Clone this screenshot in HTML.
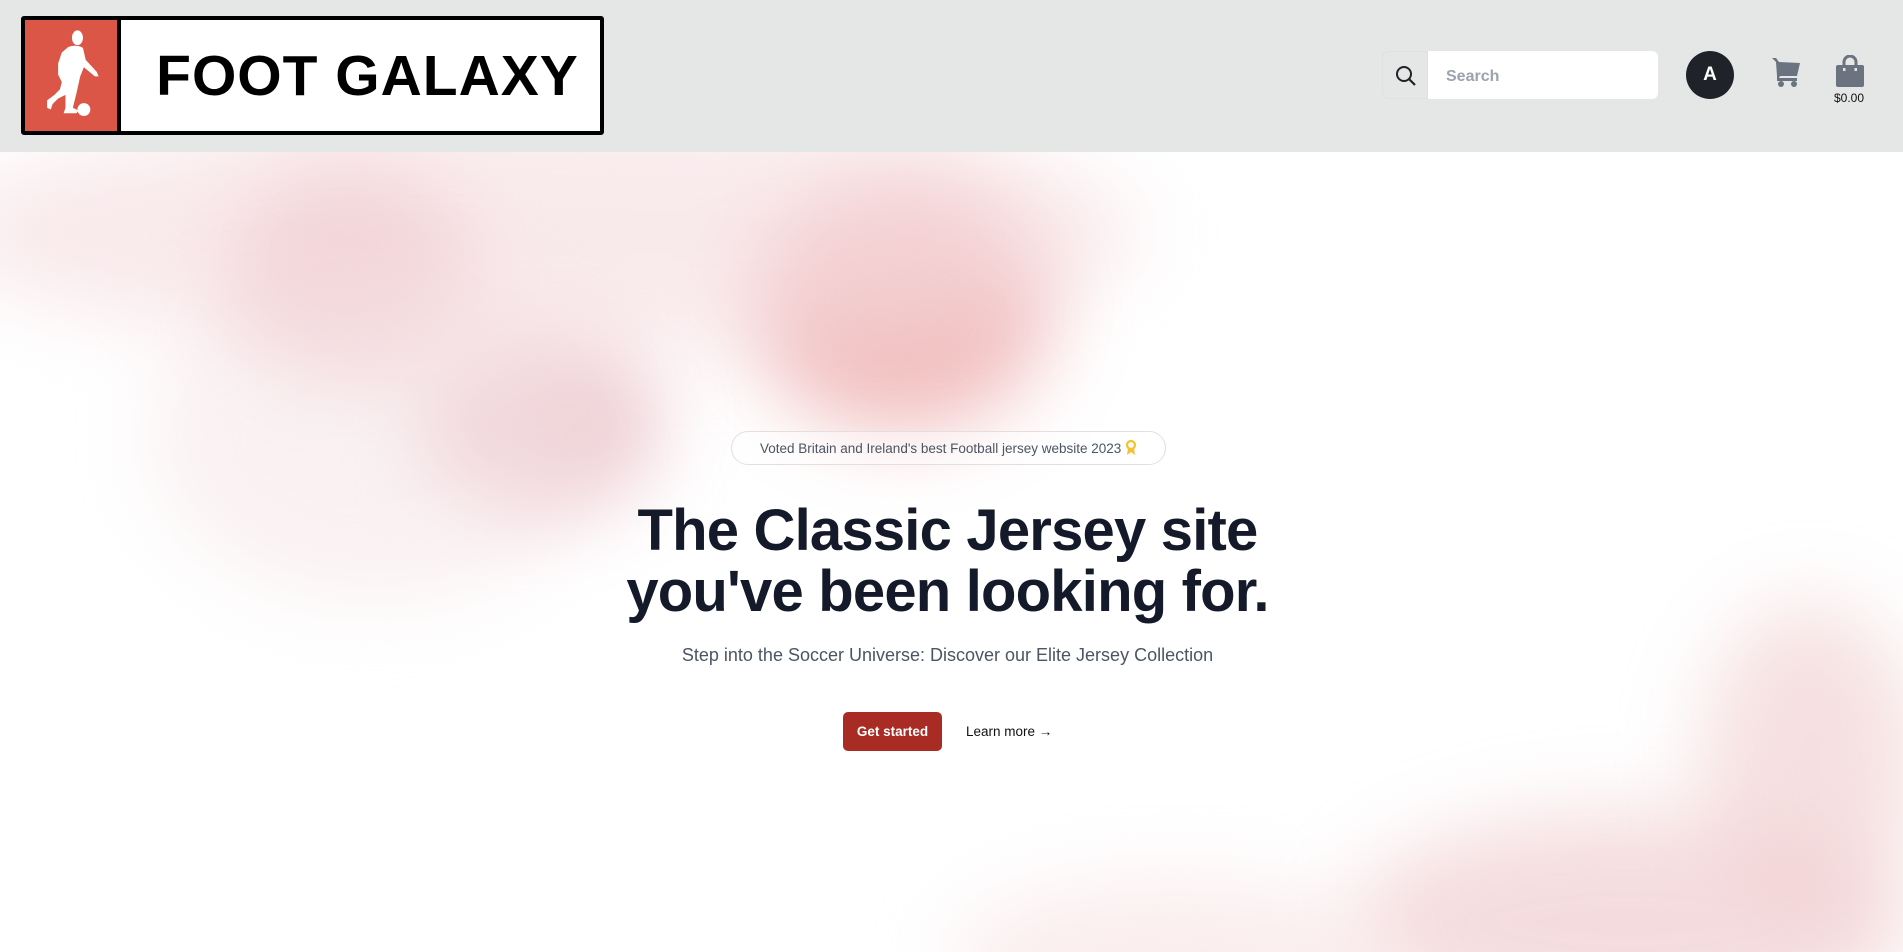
<!DOCTYPE html>
<html><head><meta charset="utf-8"><style>
*{margin:0;padding:0;box-sizing:border-box}
html,body{width:1903px;height:952px;overflow:hidden}
body{font-family:"Liberation Sans",sans-serif;background:#fff;position:relative}
header{position:absolute;left:0;top:0;width:1903px;height:152px;background:#e5e7e6}
.logo{position:absolute;left:21px;top:16px;width:583px;height:119px;border:4px solid #000;border-radius:3px;background:#fff;display:flex}
.logo .red{width:96px;height:100%;background:#dc5647;border-right:4px solid #000;position:relative}
.logo .txt{flex:1;display:flex;align-items:center;justify-content:center;font-weight:bold;font-size:57px;letter-spacing:1px;color:#000;padding-left:14px}
.sbtn{position:absolute;left:1382px;top:51px;width:46px;height:48px;border:1px solid #dfe1e1;border-radius:6px 0 0 6px}
.sin{position:absolute;left:1428px;top:51px;width:230px;height:48px;background:#fff;border-radius:0 6px 6px 0;color:#9ca3af;font-size:16px;padding:17px 0 0 18px;font-weight:bold}
.av{position:absolute;left:1686px;top:51px;width:48px;height:48px;border-radius:50%;background:#1f2329;color:#fff;font-weight:bold;font-size:19px;display:flex;align-items:center;justify-content:center}
.price{position:absolute;left:1834px;top:91px;font-size:12px;color:#111}
.bg{position:absolute;left:0;top:152px;width:1903px;height:800px;overflow:hidden}
.b{position:absolute;border-radius:50%;filter:blur(40px)}
.badge{position:absolute;left:731px;top:431px;width:435px;height:34px;border:1px solid #e5dede;border-radius:17px;font-size:13.5px;color:#4b5563;display:flex;align-items:center;justify-content:center;background:rgba(255,255,255,.4)}
h1{position:absolute;left:0;width:1895px;top:500px;text-align:center;font-size:58px;line-height:61px;color:#141a29;font-weight:bold;letter-spacing:-0.8px}
.sub{position:absolute;left:0;width:1895px;top:645px;text-align:center;font-size:18px;color:#4b5563}
.gs{position:absolute;left:843px;top:712px;width:99px;height:39px;background:#a82b24;border-radius:5px;color:#fff;font-weight:bold;font-size:13.5px;display:flex;align-items:center;justify-content:center}
.lm{position:absolute;left:966px;top:724px;font-size:13.5px;color:#111}
</style></head><body>
<div class="bg">
<div class="b" style="left:230px;top:20px;width:240px;height:200px;background:#e9b3bb;opacity:.7"></div>
<div class="b" style="left:420px;top:180px;width:240px;height:180px;background:#e6b5be;opacity:.7"></div>
<div class="b" style="left:750px;top:30px;width:300px;height:250px;background:#eeaeae;opacity:.8"></div>
<div class="b" style="left:-60px;top:-40px;width:1200px;height:240px;background:#f5dcdf;opacity:.6"></div>
<div class="b" style="left:150px;top:120px;width:450px;height:330px;background:#f5e4e6;opacity:.5"></div>
<div class="b" style="left:1350px;top:660px;width:560px;height:220px;background:#eec6c9;opacity:.6"></div>
<div class="b" style="left:1700px;top:450px;width:220px;height:320px;background:#f0cccd;opacity:.6"></div>
<div class="b" style="left:950px;top:730px;width:450px;height:160px;background:#f7e1e2;opacity:.6"></div>
</div>
<header>
<div class="logo"><div class="red">
<svg width="92" height="111" viewBox="0 0 100 118" style="position:absolute;left:0;top:0"><g fill="#fff">
<ellipse cx="57" cy="18" rx="6" ry="8"/>
<path d="M47 28 Q56 25 63 29 L66 42 L78 55 L80 60 L76 60 L64 50 L60 60 L56 78 L52 94 L58 97 L56 100 L42 100 L44 94 L44 80 L36 84 L30 90 L28 96 L24 94 L24 86 L32 80 L38 74 L40 66 L36 58 L36 46 L40 34 Z"/>
<circle cx="64" cy="96" r="7"/></g></svg></div>
<div class="txt">FOOT GALAXY</div></div>
<div class="sbtn"><svg width="46" height="46" viewBox="0 0 46 46"><circle cx="21" cy="22" r="7" fill="none" stroke="#1f2329" stroke-width="2"/><path d="M26 27 L32 33" stroke="#1f2329" stroke-width="2.2"/></svg></div>
<div class="sin">Search</div>
<div class="av">A</div>
<svg style="position:absolute;left:1770px;top:56px" width="32" height="32" viewBox="0 0 32 32"><g fill="#6b7280"><path d="M2 2 L6 2 L9 6 L30 7 L27 20 L10 20 L9 22 L27 22 L27 25 L7 25 L7 20 L6 6 Z"/><circle cx="11" cy="28" r="3"/><circle cx="24" cy="28" r="3"/></g></svg>
<svg style="position:absolute;left:1834px;top:55px" width="32" height="33" viewBox="0 0 32 33"><path d="M10 10 V7 a6 6 0 0 1 12 0 V10" fill="none" stroke="#6b7280" stroke-width="3"/><rect x="2" y="10" width="28" height="22" rx="2" fill="#6b7280"/><rect x="9" y="13" width="2.5" height="3" fill="#e5e7e6"/><rect x="20.5" y="13" width="2.5" height="3" fill="#e5e7e6"/></svg>
<div class="price">$0.00</div>
</header>
<div class="badge">Voted Britain and Ireland's best Football jersey website 2023&nbsp;<svg width="12" height="16" viewBox="0 0 12 16"><circle cx="6" cy="5" r="4" fill="none" stroke="#f2c230" stroke-width="2.2"/><path d="M3 8 L2 15 L6 12 L10 15 L9 8" fill="#f2c230"/></svg></div>
<h1>The Classic Jersey site<br>you've been looking for.</h1>
<div class="sub">Step into the Soccer Universe: Discover our Elite Jersey Collection</div>
<div class="gs">Get started</div>
<div class="lm">Learn more →</div>
</body></html>
